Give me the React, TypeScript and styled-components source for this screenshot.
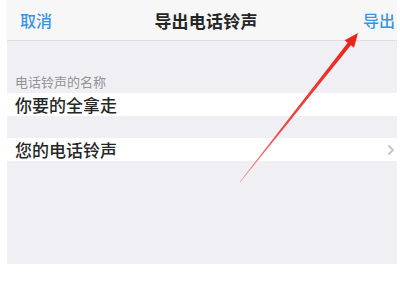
import React from 'react';
import styled, { createGlobalStyle } from 'styled-components';

const GlobalStyle = createGlobalStyle`
  html, body {
    margin: 0;
    padding: 0;
    background: #ffffff;
  }
  body {
    font-family: "Noto Sans CJK SC", "Noto Sans", sans-serif;
  }
`;

const Screen = styled.div`
  position: relative;
  margin-left: 7px;
  width: 390px;
  height: 264px;
  background: #efeff4;
  overflow: hidden;
`;

const NavBar = styled.div`
  display: grid;
  grid-template-columns: 1fr auto 1fr;
  align-items: center;
  height: 40px;
  padding: 0 2px 0 13px;
  background: #f7f7f8;
  border-bottom: 1px solid #dedee2;
`;

const NavButton = styled.span<{ $align: 'left' | 'right' }>`
  justify-self: ${(p) => (p.$align === 'left' ? 'start' : 'end')};
  color: #3b95de;
  font-size: 16px;
  font-weight: 500;
`;

const NavTitle = styled.span`
  color: #262626;
  font-size: 17px;
  font-weight: 600;
  letter-spacing: 0.2px;
  margin-left: -3px;
`;

const SectionHeader = styled.div`
  padding: 33px 8px 0;
  height: 16px;
  line-height: 16px;
  margin-bottom: 3px;
  color: #929297;
  font-size: 13px;
`;

const Row = styled.div<{ $gapTop?: number }>`
  display: flex;
  align-items: center;
  justify-content: space-between;
  height: 23px;
  margin-top: ${(p) => p.$gapTop ?? 0}px;
  padding: 0 2px 0 8px;
  background: #ffffff;
  color: #262626;
  font-size: 17px;
  font-weight: 500;
`;

const Chevron = () => (
  <svg width="8" height="12" viewBox="0 0 8 12">
    <path d="M1.5 1.5 L6 6 L1.5 10.5" fill="none" stroke="#c4c4c9" strokeWidth="1.8" />
  </svg>
);

const ArrowLayer = styled.svg`
  position: absolute;
  inset: 0;
  pointer-events: none;
`;

export default function App() {
  return (
    <>
      <GlobalStyle />
      <Screen>
        <NavBar>
          <NavButton $align="left">取消</NavButton>
          <NavTitle>导出电话铃声</NavTitle>
          <NavButton $align="right">导出</NavButton>
        </NavBar>
        <SectionHeader>电话铃声的名称</SectionHeader>
        <Row>你要的全拿走</Row>
        <Row $gapTop={22}>
          您的电话铃声
          <Chevron />
        </Row>
        <ArrowLayer width="390" height="264" viewBox="0 0 390 264">
          <defs>
            <linearGradient id="shaft" x1="233" y1="182" x2="351" y2="33" gradientUnits="userSpaceOnUse">
              <stop offset="0" stopColor="#f3a09c" />
              <stop offset="0.35" stopColor="#ee4a40" />
              <stop offset="1" stopColor="#ec2218" />
            </linearGradient>
          </defs>
          <polygon
            points="233.3,182.2 232.7,181.8 340.7,42.8 337.6,40.3 351,33 347,47.7 343.9,45.2"
            fill="url(#shaft)"
          />
        </ArrowLayer>
      </Screen>
    </>
  );
}
